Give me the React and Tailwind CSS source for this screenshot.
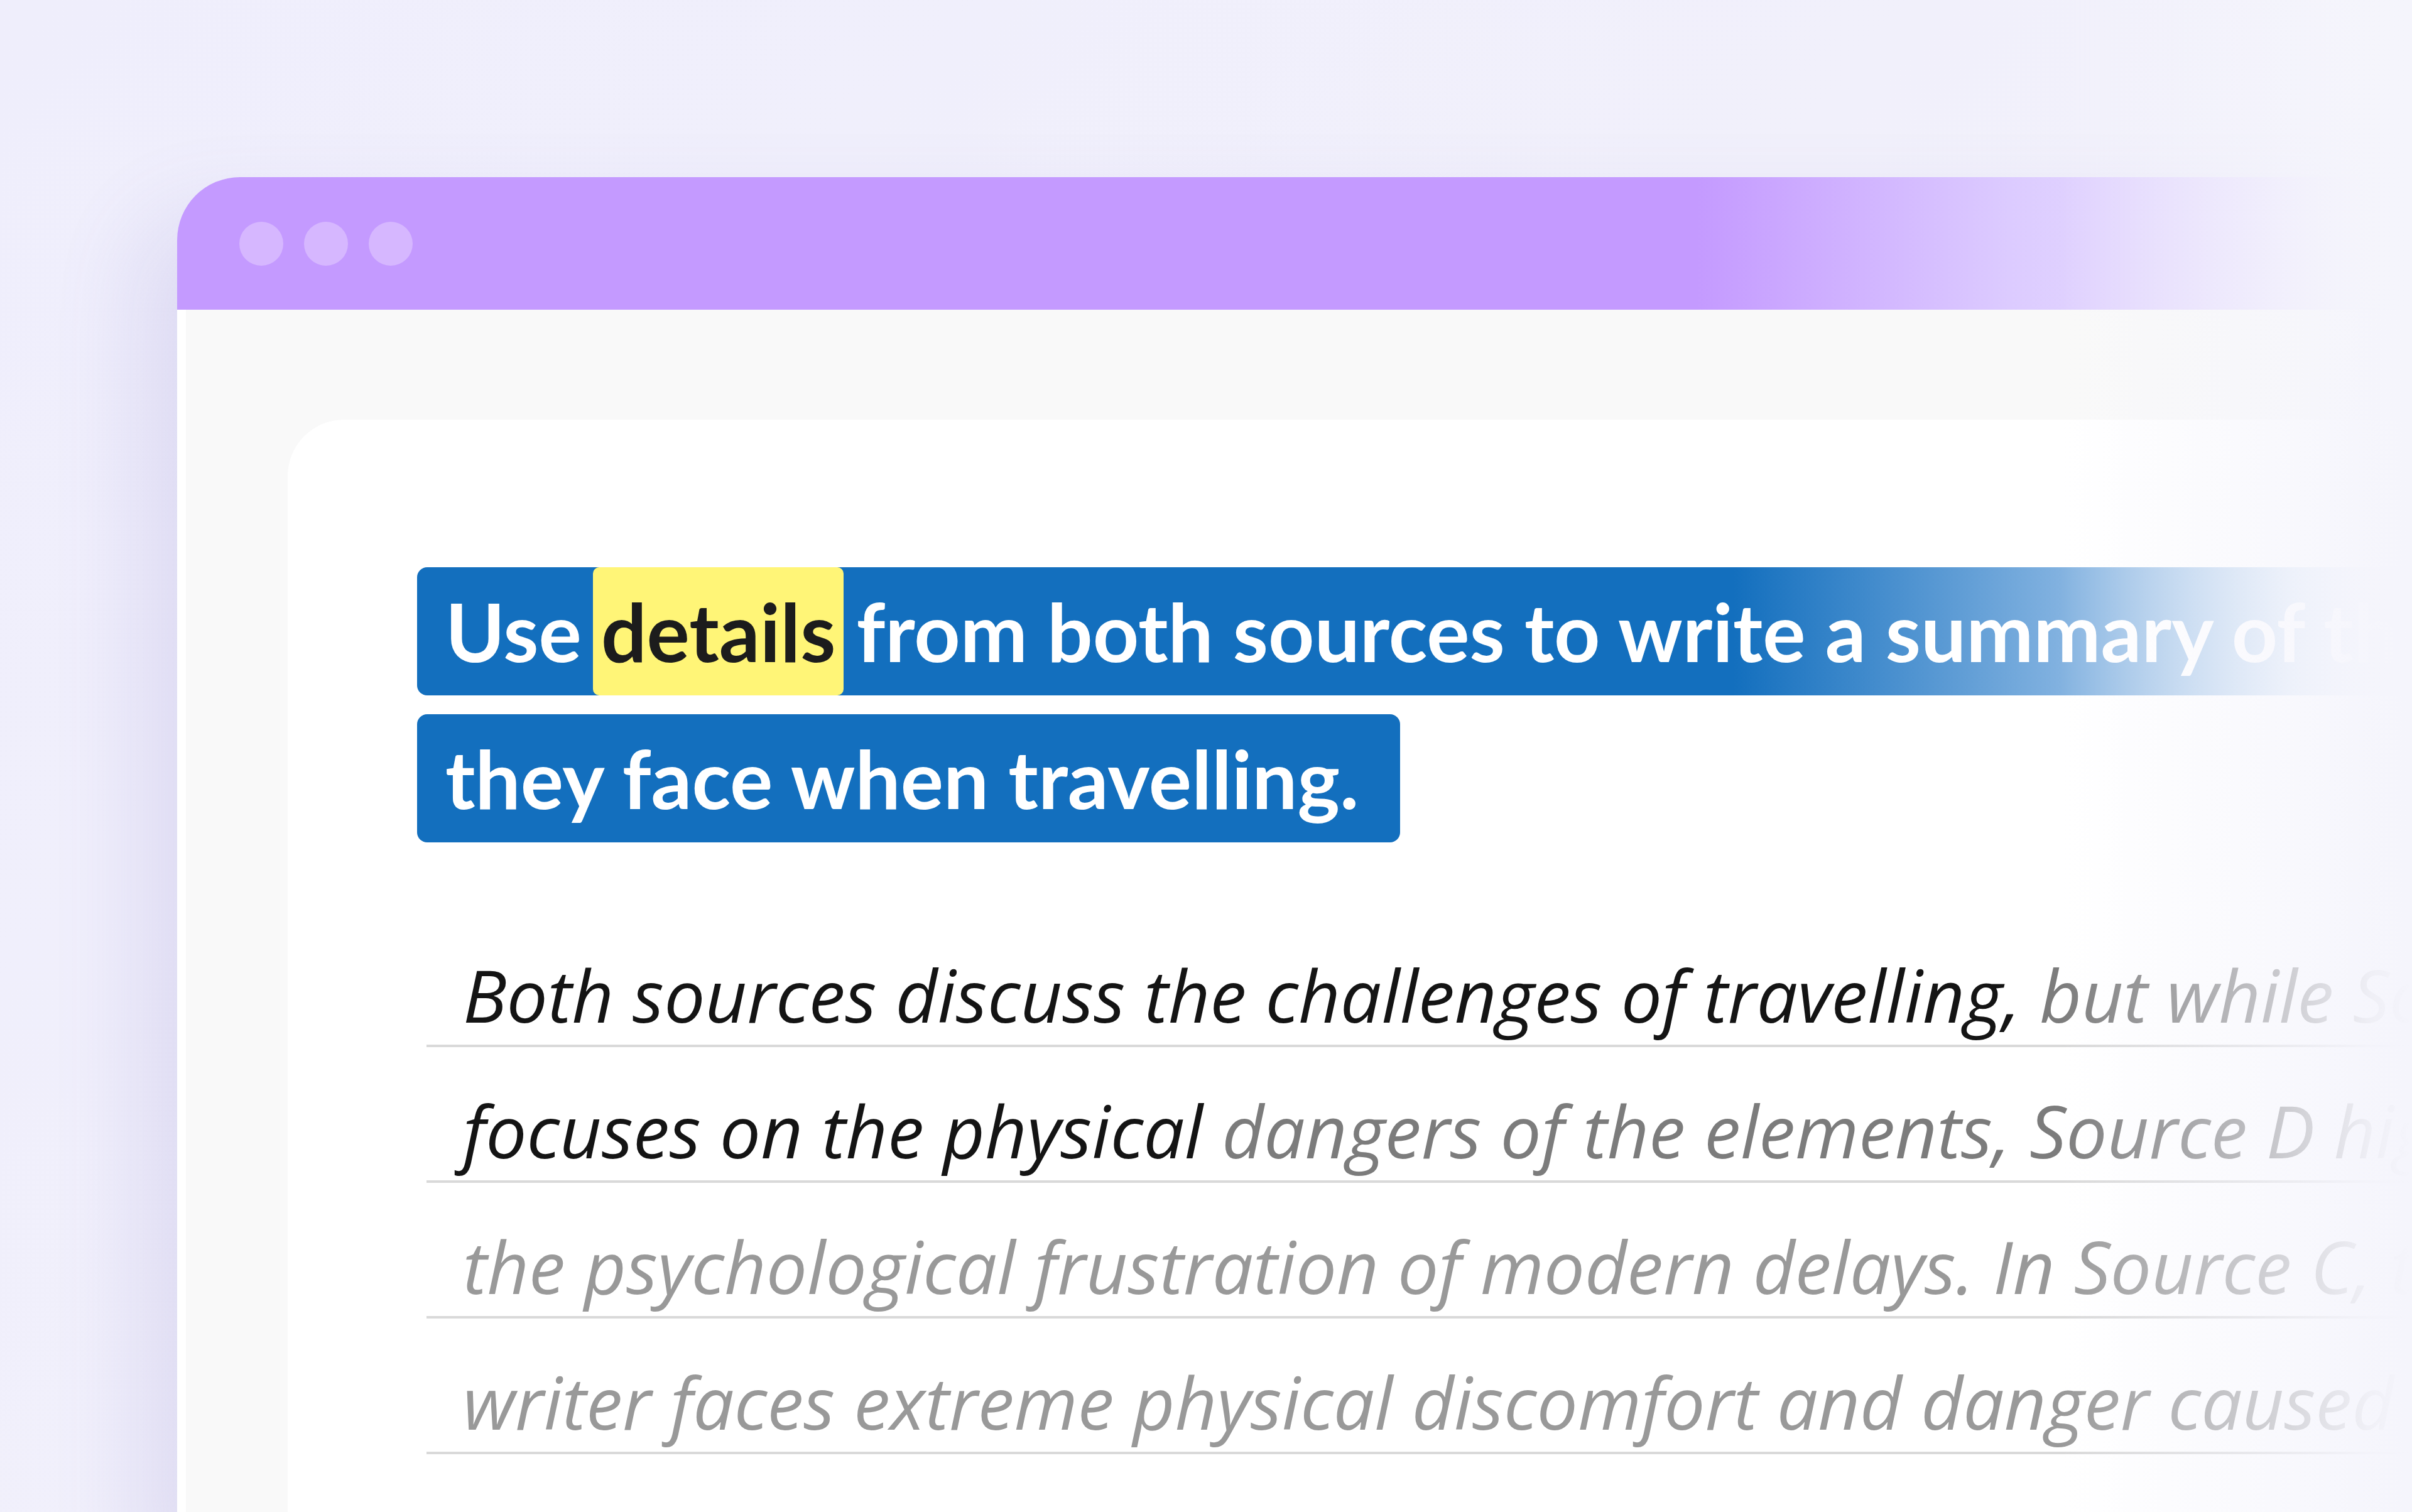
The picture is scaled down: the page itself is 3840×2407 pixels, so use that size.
export default function App() {
  const font = { fontFamily: 'Lato, "Liberation Sans", sans-serif' };
  const bodyFont = { fontFamily: '"Open Sans", "Liberation Sans", sans-serif' };

  const lines = [
    { dark: 'Both sources discuss the challenges of travelling,', grey: ' but while Source C' },
    { dark: 'focuses on the physical', grey: ' dangers of the elements, Source D highlights' },
    { dark: '', grey: 'the psychological frustration of modern delays. In Source C, the' },
    { dark: '', grey: 'writer faces extreme physical discomfort and danger caused by' },
  ];

  return (
    <div
      className="relative w-[3840px] h-[2407px] overflow-hidden bg-[linear-gradient(135deg,#efeefc_0%,#f1f0fb_50%,#f4f4fb_100%)] pt-[282px] pl-[282px]"
      style={font}
    >
      {/* window */}
      <div className="w-[3558px] h-[2200px] rounded-tl-[100px] overflow-hidden shadow-[-60px_60px_140px_rgba(110,100,190,0.14)]">
        {/* title bar */}
        <div className="h-[211px] flex items-center gap-[33px] pl-[99px] bg-[linear-gradient(90deg,#c49aff_0%,#c49aff_68%,#dccbff_82%,#f2f1fb_100%)]">
          <div className="w-[70px] h-[70px] rounded-full bg-[#d6b7ff]" />
          <div className="w-[70px] h-[70px] rounded-full bg-[#d6b7ff]" />
          <div className="w-[70px] h-[70px] rounded-full bg-[#d6b7ff]" />
        </div>

        {/* window body */}
        <div className="h-full bg-[#f9f9f9] border-l-[14px] border-white pl-[162px] pt-[175px]">
          <div className="h-full bg-white rounded-tl-[90px] pl-[206px] pt-[235px]">
            {/* prompt */}
            <div className="h-[204px] flex items-center rounded-l-[16px] bg-[linear-gradient(90deg,#136fbe_0%,#136fbe_66%,#7fb0df_82%,#dde9f7_94%,#f8f8fd_100%)] pl-[45px] text-white text-[128px] leading-none font-bold whitespace-nowrap">
              <span className="mr-[18px]">Use</span>
              <span className="h-full flex items-center bg-[#fff577] text-[#1c1c1c] rounded-[10px] px-[13px]">details</span>
              <span className="ml-[20px]">from both sources to write a summary of the challenges</span>
            </div>
            <div className="mt-[30px] h-[204px] w-[1565px] flex items-center rounded-[16px] bg-[#136fbe] pl-[45px] text-white text-[128px] leading-none font-bold whitespace-nowrap">
              they face when travelling.
            </div>

            {/* answer lines */}
            <div className="mt-[110px] ml-[15px]" style={bodyFont}>
              {lines.map((l, i) => (
                <div
                  key={i}
                  className="h-[216px] flex items-end pb-[22px] pl-[58px] border-b-[4px] border-[#d9d9d9] italic text-[116px] leading-none whitespace-nowrap"
                >
                  <span>
                    {l.dark && <span className="text-[#141414]">{l.dark}</span>}
                    <span className={l.dark ? 'text-[#7c7c7c]' : 'text-[#999999]'}>{l.grey}</span>
                  </span>
                </div>
              ))}
            </div>
          </div>
        </div>
      </div>

      {/* right-edge fade */}
      <div className="absolute top-0 right-0 w-[560px] h-full bg-[linear-gradient(90deg,rgba(245,245,252,0)_0%,rgba(245,245,252,0.55)_55%,rgba(245,245,252,0.95)_88%,#f5f5fc_100%)]" />
    </div>
  );
}
